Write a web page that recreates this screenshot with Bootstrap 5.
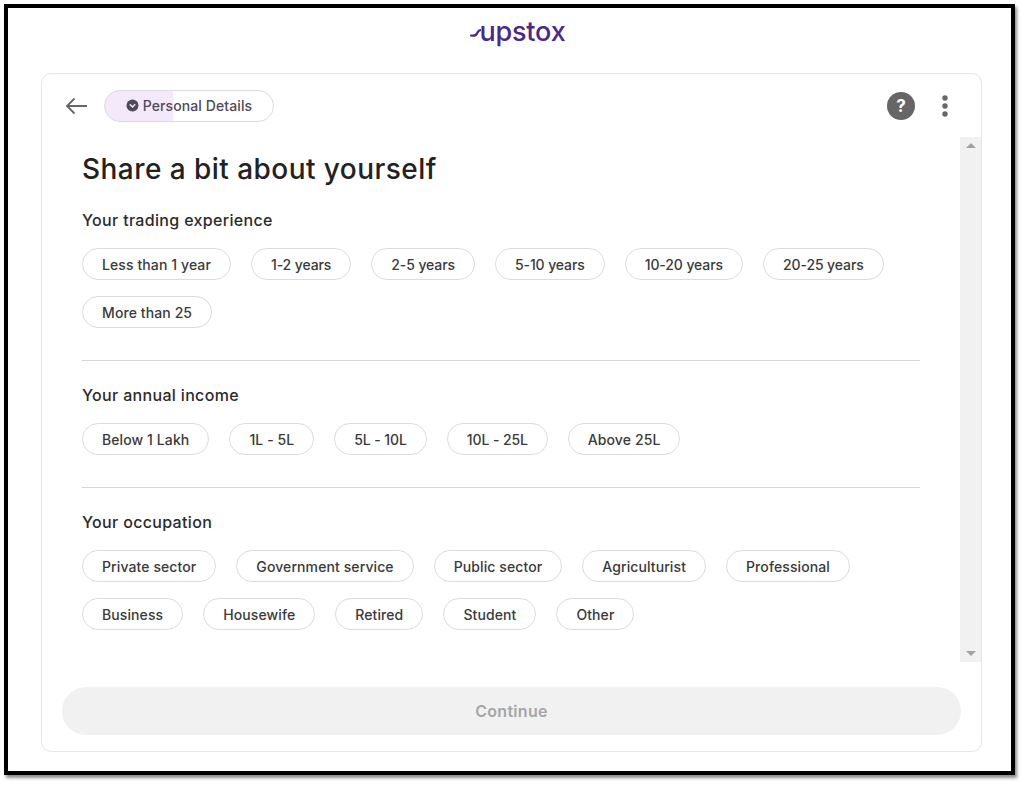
<!DOCTYPE html>
<html lang="en">

<head>
    <meta charset="UTF-8" />
    <title>Upstox - Personal Details</title>
    <link rel="stylesheet" href="https://cdn.jsdelivr.net/npm/bootstrap@5.3.3/dist/css/bootstrap.min.css">
    <script src="https://cdn.jsdelivr.net/npm/bootstrap@5.3.3/dist/js/bootstrap.bundle.min.js"></script>
    <style>
        html,
        body {
            height: 786px;
            overflow: hidden;
        }

        body {
            background-color: #fff;
            font-family: 'Inter', 'Liberation Sans', sans-serif;
            color: #2b2b2b;
            padding: 4px 0 0 4px;
        }

        .frame {
            width: 1011px;
            height: 771px;
            border: 4px solid #000;
            box-shadow: 2px 3px 3px rgba(0, 0, 0, .45);
            padding: 0 29px 18px 33px;
        }

        .logo-row {
            height: 65px;
        }

        .logo {
            color: #4a2a83;
            font-size: 27px;
            font-weight: 500;
            line-height: 1;
            letter-spacing: -.2px;
            margin: 2px 0 0 12px;
        }

        .logo svg {
            margin-right: -1px;
            margin-top: 2px;
        }

        .main-card {
            height: 679px;
            border: 1px solid #e6e6e6;
            border-radius: 10px;
        }

        .top-bar {
            height: 63px;
            padding: 0 33px 0 23px;
        }

        .step-pill {
            width: 170px;
            height: 32px;
            margin-left: 17px;
            border: 1px solid #dcdcdc;
            border-radius: 16px;
            background: linear-gradient(to right, #f3e9fa 68px, #fff 68px);
            font-size: 14px;
            font-weight: 500;
            letter-spacing: .1px;
            color: #4e4b57;
        }

        .help-gap {
            margin-left: 27px;
        }

        .scroll-area {
            height: 525px;
            margin-left: 20px;
        }

        .content {
            width: 898px;
            padding: 17px 40px 0 20px;
        }

        .content h1 {
            font-size: 28px;
            font-weight: 500;
            line-height: 30px;
            letter-spacing: .45px;
            color: #222;
            margin-bottom: 26px;
        }

        .group-title {
            font-size: 16px;
            font-weight: 500;
            line-height: 20px;
            letter-spacing: .33px;
            margin-bottom: 18px;
        }

        .chips {
            column-gap: 20px;
            row-gap: 16px;
        }

        .chip {
            height: 32px;
            padding: 0 19px;
            border: 1px solid #dcdcdc;
            border-radius: 16px;
            background: #fff;
            font-size: 14px;
            font-weight: 500;
            letter-spacing: .1px;
            color: #3a3a3a;
        }

        .chip.num {
            letter-spacing: -.1px;
        }

        .content hr {
            margin: 32px 0 24px;
            border-color: #d6d6d6;
            opacity: 1;
        }

        .scroll-track {
            width: 21px;
            background: #f1f1f1;
            padding: 6px 0;
        }

        .arrow-up,
        .arrow-down {
            width: 0;
            height: 0;
            border-left: 5px solid transparent;
            border-right: 5px solid transparent;
        }

        .arrow-up {
            border-bottom: 5px solid #a3a3a3;
        }

        .arrow-down {
            border-top: 5px solid #a3a3a3;
        }

        .btn-continue {
            width: 899px;
            height: 48px;
            margin: 25px 0 0 20px;
            border: 0;
            border-radius: 24px;
            background: #f1f1f1;
            color: #a6a6a6;
            font-size: 16px;
            font-weight: 600;
            letter-spacing: .3px;
        }
    </style>
</head>

<body>
    <div class="frame d-flex flex-column">
        <div class="logo-row d-flex justify-content-center align-items-start pt-2">
            <div class="logo d-flex align-items-center">
                <svg width="11" height="12" viewBox="0 0 11 12" fill="none">
                    <path d="M1 8.5C4 9 6 9 7 6.5C8 4 9 3 11 3" stroke="#4a2a83" stroke-width="2.2" stroke-linecap="round" />
                </svg>
                <span>upstox</span>
            </div>
        </div>

        <div class="main-card">
            <!-- Top bar -->
            <div class="top-bar d-flex align-items-center">
                <svg width="22" height="18" viewBox="0 0 22 18" fill="none" stroke="#666" stroke-width="1.8">
                    <path d="M22 9H2M9.5 1.5L2 9l7.5 7.5" />
                </svg>
                <div class="step-pill d-flex align-items-center justify-content-center gap-1">
                    <svg width="13" height="13" viewBox="0 0 13 13">
                        <circle cx="6.5" cy="6.5" r="6" fill="#4f4a58" />
                        <path d="M3.8 5.3l2.7 2.7 2.7-2.7" fill="none" stroke="#f3e9fa" stroke-width="1.5" />
                    </svg>
                    <span>Personal Details</span>
                </div>
                <div class="ms-auto d-flex align-items-center">
                    <svg width="28" height="28" viewBox="0 0 28 28">
                        <circle cx="14" cy="14" r="14" fill="#666" />
                        <text x="14" y="20" text-anchor="middle" fill="#fff" font-family="Inter, sans-serif" font-size="17" font-weight="700">?</text>
                    </svg>
                    <svg class="help-gap" width="6" height="22" viewBox="0 0 6 22" fill="#666">
                        <circle cx="3" cy="3" r="2.7" />
                        <circle cx="3" cy="11" r="2.7" />
                        <circle cx="3" cy="19" r="2.7" />
                    </svg>
                </div>
            </div>

            <!-- Scrollable form -->
            <div class="scroll-area d-flex">
                <div class="content">
                    <h1>Share a bit about yourself</h1>

                    <div class="group-title">Your trading experience</div>
                    <div class="chips d-flex flex-wrap">
                        <div class="chip d-flex align-items-center">Less than 1 year</div>
                        <div class="chip num d-flex align-items-center">1-2 years</div>
                        <div class="chip num d-flex align-items-center">2-5 years</div>
                        <div class="chip num d-flex align-items-center">5-10 years</div>
                        <div class="chip num d-flex align-items-center">10-20 years</div>
                        <div class="chip num d-flex align-items-center">20-25 years</div>
                        <div class="chip d-flex align-items-center">More than 25</div>
                    </div>
                    <hr>

                    <div class="group-title">Your annual income</div>
                    <div class="chips d-flex flex-wrap">
                        <div class="chip d-flex align-items-center">Below 1 Lakh</div>
                        <div class="chip d-flex align-items-center">1L - 5L</div>
                        <div class="chip num d-flex align-items-center">5L - 10L</div>
                        <div class="chip num d-flex align-items-center">10L - 25L</div>
                        <div class="chip d-flex align-items-center">Above 25L</div>
                    </div>
                    <hr>

                    <div class="group-title">Your occupation</div>
                    <div class="chips d-flex flex-wrap">
                        <div class="chip d-flex align-items-center">Private sector</div>
                        <div class="chip d-flex align-items-center">Government service</div>
                        <div class="chip d-flex align-items-center">Public sector</div>
                        <div class="chip d-flex align-items-center">Agriculturist</div>
                        <div class="chip d-flex align-items-center">Professional</div>
                        <div class="chip d-flex align-items-center">Business</div>
                        <div class="chip d-flex align-items-center">Housewife</div>
                        <div class="chip d-flex align-items-center">Retired</div>
                        <div class="chip d-flex align-items-center">Student</div>
                        <div class="chip d-flex align-items-center">Other</div>
                    </div>
                </div>
                <div class="scroll-track d-flex flex-column align-items-center justify-content-between">
                    <div class="arrow-up"></div>
                    <div class="arrow-down"></div>
                </div>
            </div>

            <button type="button" class="btn-continue d-block">Continue</button>
        </div>
    </div>
</body>

</html>
